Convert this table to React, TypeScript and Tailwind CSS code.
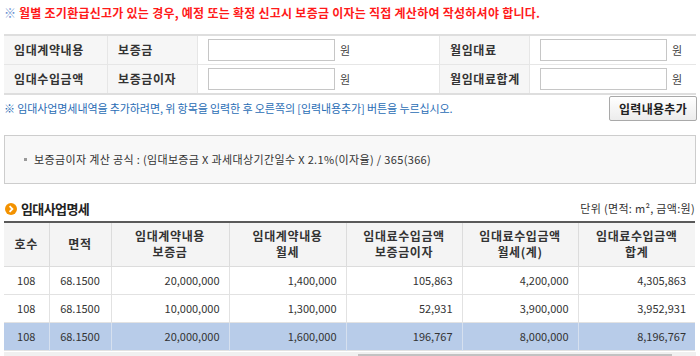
import React from 'react';

// 임대사업명세 입력 화면
const rows = [
  { ho: '108', area: '68.1500', dep: '20,000,000', rent: '1,400,000', intr: '105,863', rentSum: '4,200,000', total: '4,305,863' },
  { ho: '108', area: '68.1500', dep: '10,000,000', rent: '1,300,000', intr: '52,931', rentSum: '3,900,000', total: '3,952,931' },
  { ho: '108', area: '68.1500', dep: '20,000,000', rent: '1,600,000', intr: '196,767', rentSum: '8,000,000', total: '8,196,767', sel: true },
];

function Field() {
  return (
    <div className="flex items-center gap-[5px] px-[10px]">
      <div className="w-[127px] h-[22px] border border-[#c6c6c6] bg-white" />
      <span className="text-[11px] text-[#444]">원</span>
    </div>
  );
}

export default function App() {
  const lab = 'flex items-center bg-[#f6f6f6] font-bold text-[12px] text-[#333] tracking-[0.6px]';
  const th = 'border-r border-[#dcdcdc] font-bold text-[12px] text-[#333] tracking-[0.6px] leading-[16px] text-center';
  return (
    <div className="w-[700px] h-[356px] overflow-hidden bg-white pl-[4px] pr-[4px] font-['Noto_Sans_CJK_KR',sans-serif]">
      {/* 경고 문구 */}
      <div className="h-[28px] flex items-center pb-[3px] text-[12px]">
        <span className="text-[#6b8fcf] mr-[3px]">※</span>
        <span className="font-bold text-[#ff1a1a] tracking-[0.25px]">월별 조기환급신고가 있는 경우, 예정 또는 확정 신고시 보증금 이자는 직접 계산하여 작성하셔야 합니다.</span>
      </div>

      {/* 입력 폼 */}
      <div className="mt-[6px] border-t-2 border-b-2 border-[#dedede] grid grid-cols-[104px_90px_242px_90px_1fr]">
        <div className={`${lab} h-[29px] pl-[10px] border-b border-r border-[#e6e6e6]`}>임대계약내용</div>
        <div className={`${lab} pl-[10px] border-b border-r border-[#e6e6e6]`}>보증금</div>
        <div className="border-b border-r border-[#e6e6e6] flex"><Field /></div>
        <div className={`${lab} pl-[10px] border-b border-r border-[#e6e6e6]`}>월임대료</div>
        <div className="border-b border-[#e6e6e6] flex"><Field /></div>
        <div className={`${lab} h-[28px] pl-[10px] border-r border-[#e6e6e6]`}>임대수입금액</div>
        <div className={`${lab} pl-[10px] border-r border-[#e6e6e6]`}>보증금이자</div>
        <div className="border-r border-[#e6e6e6] flex"><Field /></div>
        <div className={`${lab} pl-[10px] border-r border-[#e6e6e6]`}>월임대료합계</div>
        <div className="flex"><Field /></div>
      </div>

      {/* 안내 + 버튼 */}
      <div className="flex items-start justify-between mt-[1px]">
        <div className="pt-[4px] text-[11px] text-[#2a6db5] tracking-[-0.1px]">※ 임대사업명세내역을 추가하려면, 위 항목을 입력한 후 오른쪽의 [입력내용추가] 버튼을 누르십시오.</div>
        <button className="h-[25px] w-[88px] mr-[-1px] border border-[#a9a9a9] rounded-[2px] bg-gradient-to-b from-white to-[#ececec] font-bold text-[12px] text-[#222] tracking-[0.3px]">입력내용추가</button>
      </div>

      {/* 계산 공식 */}
      <div className="mt-[14px] h-[49px] border border-[#cdcdcd] bg-[#f8f8f8] flex items-center pl-[19px] text-[11px] text-[#333] tracking-[0.35px]">
        <span className="inline-block w-[3px] h-[3px] bg-[#9a9a9a] mr-[7px]" />
        보증금이자 계산 공식 : (임대보증금 X 과세대상기간일수 X 2.1%(이자율) / 365(366)
      </div>

      {/* 임대사업명세 */}
      <div className="mt-[16px] h-[17px] flex items-center justify-between">
        <div className="flex items-center gap-[4px] pl-[1px]">
          <svg width="12" height="12" viewBox="0 0 12 12">
            <circle cx="6" cy="6" r="6" fill="#f39200" />
            <path d="M4.6 3.2 L7.4 6 L4.6 8.8" stroke="#fff" strokeWidth="1.8" fill="none" />
          </svg>
          <span className="font-bold text-[13px] text-[#222] tracking-[-0.6px]">임대사업명세</span>
        </div>
        <span className="text-[11px] text-[#333] tracking-[0.3px] pr-[1px]">단위 (면적: m², 금액:원)</span>
      </div>

      <table className="mt-[4px] w-[691px] table-fixed border-collapse border-t-2 border-[#5a5a5a] text-[11px] text-[#333]">
        <colgroup>
          <col className="w-[45px]" />
          <col className="w-[62px]" />
          <col className="w-[118px]" />
          <col className="w-[117px]" />
          <col className="w-[116px]" />
          <col className="w-[116px]" />
          <col />
        </colgroup>
        <thead>
          <tr className="h-[44px] bg-[#f4f4f4] border-b border-[#dcdcdc]">
            <th className={th}>호수</th>
            <th className={th}>면적</th>
            <th className={th}>임대계약내용<br />보증금</th>
            <th className={th}>임대계약내용<br />월세</th>
            <th className={th}>임대료수입금액<br />보증금이자</th>
            <th className={th}>임대료수입금액<br />월세(계)</th>
            <th className={`${th} border-r-0`}>임대료수입금액<br />합계</th>
          </tr>
        </thead>
        <tbody>
          {rows.map((r, i) => {
            const td = `border-r ${r.sel ? 'border-[#d6e0ef]' : 'border-[#e2e2e2]'}`;
            return (
              <tr key={i} className={`h-[28px] border-b border-[#e2e2e2] ${r.sel ? 'bg-[#b8cce9]' : 'bg-white'}`}>
                <td className={`${td} text-center`}>{r.ho}</td>
                <td className={`${td} text-center`}>{r.area}</td>
                <td className={`${td} text-right pr-[9px]`}>{r.dep}</td>
                <td className={`${td} text-right pr-[9px]`}>{r.rent}</td>
                <td className={`${td} text-right pr-[9px]`}>{r.intr}</td>
                <td className={`${td} text-right pr-[9px]`}>{r.rentSum}</td>
                <td className="text-right pr-[9px]">{r.total}</td>
              </tr>
            );
          })}
        </tbody>
      </table>

      {/* 가로 스크롤바 */}
      <div className="h-[17px] bg-[#f0f0f0] flex items-center px-[4px] mt-[1px]">
        <svg width="22" height="13" viewBox="0 0 22 13"><path d="M17 3 L13 6.5 L17 10 Z" fill="#606060" /></svg>
        <div className="flex-1 h-[13px] relative">
          <div className="absolute left-[328px] w-[314px] h-[13px] bg-[#c2c2c2]" />
        </div>
        <svg width="14" height="13" viewBox="0 0 14 13"><path d="M5 3 L9 6.5 L5 10 Z" fill="#606060" /></svg>
      </div>
    </div>
  );
}
